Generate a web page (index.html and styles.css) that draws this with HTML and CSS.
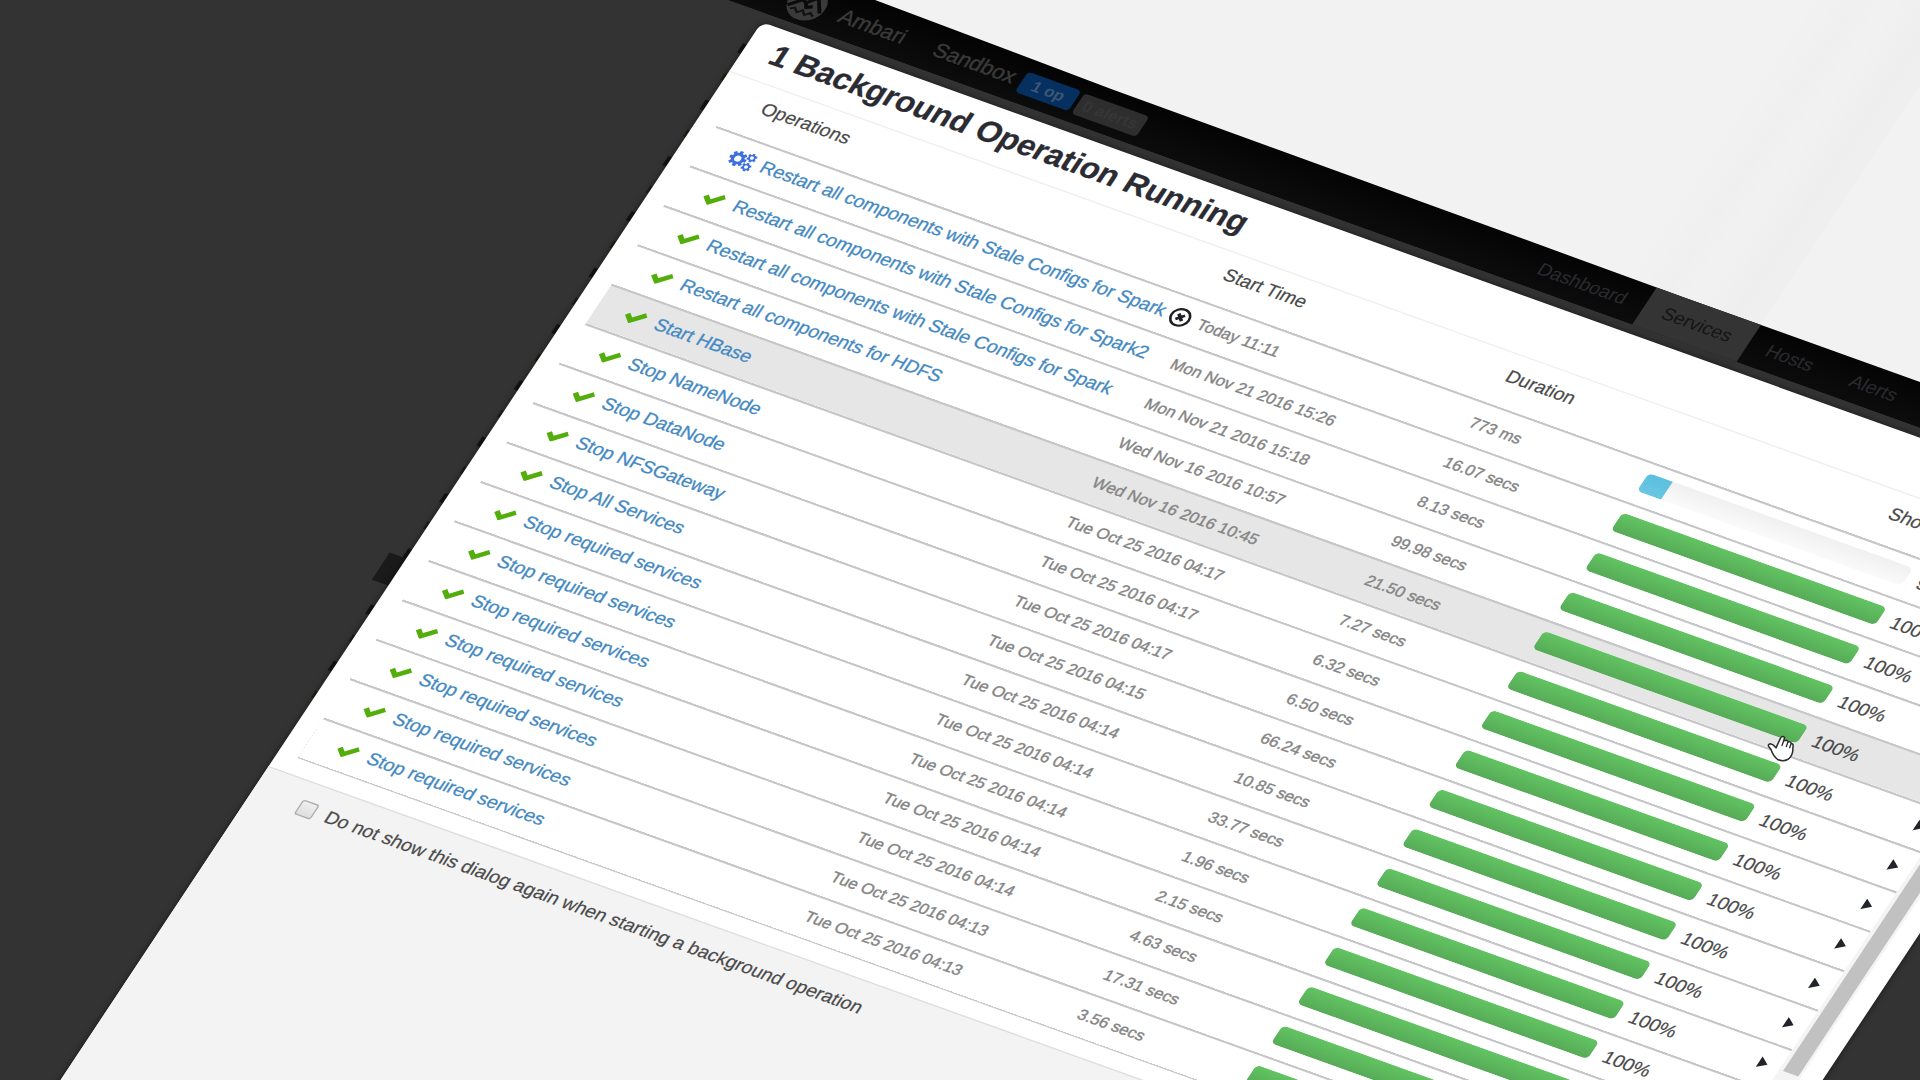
FILE: index.html
```html
<!DOCTYPE html>
<html lang="en">
<head>
<meta charset="utf-8">
<title>Ambari - Background Operations</title>
<link rel="stylesheet" href="styles.css">
</head>
<body>
<div class="stage">
  <div class="backdrop"></div>
  <div class="beam"></div>
  <nav class="navbar">
    <svg class="logo" viewBox="0 0 28 28"><circle cx="14" cy="14" r="14" fill="#3a3a3a"/><path d="M2 20 L10 12 L13 14 L19 7 L26 18 M13 14 L15 17 L19 15" fill="none" stroke="#0b0b0b" stroke-width="2.6"/><path d="M5 22 l3-2 3 3 3-3 3 3 3-3 3 2" fill="none" stroke="#111" stroke-width="1.6"/></svg>
    <span class="brand">Ambari</span>
    <span class="cluster">Sandbox</span>
    <span class="badge badge-ops">1 op</span>
    <span class="badge badge-alerts">0 alerts</span>
    <span class="tab tab-dashboard">Dashboard</span>
    <span class="tab tab-active">Services</span>
    <span class="tab">Hosts</span>
    <span class="tab">Alerts</span>
  </nav>
  <div class="sidebar-peek" id="peek"></div>
  <div class="menu-peek"></div>
  <section class="modal">
    <header class="modal-header">1 Background Operation Running</header>
    <div class="modal-body">
      <div class="table">
        <div class="table-head"><span>Operations</span><span>Start Time</span><span>Duration</span><span>Show: All (10)</span></div>
        <div id="rows"></div>
      </div>
      <div class="scrollbar"><div class="thumb"></div></div>
    </div>
    <footer class="modal-footer"><span class="checkbox"></span><span>Do not show this dialog again when starting a background operation</span></footer>
  </section>
</div>
<svg class="cursor" viewBox="0 0 84 80"><path d="M41 8 Q46 1 53 7 L50 17 L57 15 Q62 15 64 20 Q71 18 73 25 Q80 26 78 34 L77 50 Q73 66 62 73 Q48 80 32 73 Q18 62 12 43 L5 34 Q2 27 10 26 Q18 27 27 38 Z" fill="#fff" stroke="#2b2b2b" stroke-width="4.5" stroke-linejoin="round"/><path d="M50 17 L45 31 M63 20 L58 34 M72 26 L68 38" fill="none" stroke="#2b2b2b" stroke-width="4" stroke-linecap="round"/></svg>
<script src="script.js"></script>
</body>
</html>
```

FILE: script.js
```js
const operations = [
  ["Restart all components with Stale Configs for Spark", "Today 11:11", "773 ms", 9],
  ["Restart all components with Stale Configs for Spark2", "Mon Nov 21 2016 15:26", "16.07 secs", 100],
  ["Restart all components with Stale Configs for Spark", "Mon Nov 21 2016 15:18", "8.13 secs", 100],
  ["Restart all components for HDFS", "Wed Nov 16 2016 10:57", "99.98 secs", 100],
  ["Start HBase", "Wed Nov 16 2016 10:45", "21.50 secs", 100],
  ["Stop NameNode", "Tue Oct 25 2016 04:17", "7.27 secs", 100],
  ["Stop DataNode", "Tue Oct 25 2016 04:17", "6.32 secs", 100],
  ["Stop NFSGateway", "Tue Oct 25 2016 04:17", "6.50 secs", 100],
  ["Stop All Services", "Tue Oct 25 2016 04:15", "66.24 secs", 100],
  ["Stop required services", "Tue Oct 25 2016 04:14", "10.85 secs", 100],
  ["Stop required services", "Tue Oct 25 2016 04:14", "33.77 secs", 100],
  ["Stop required services", "Tue Oct 25 2016 04:14", "1.96 secs", 100],
  ["Stop required services", "Tue Oct 25 2016 04:14", "2.15 secs", 100],
  ["Stop required services", "Tue Oct 25 2016 04:14", "4.63 secs", 100],
  ["Stop required services", "Tue Oct 25 2016 04:13", "17.31 secs", 100],
  ["Stop required services", "Tue Oct 25 2016 04:13", "3.56 secs", 100]
];

function gear(cx, cy, r, teeth, w) {
  let t = "";
  for (let i = 0; i < teeth; i++) {
    t += `<rect x="${cx - w / 2}" y="${cy - r}" width="${w}" height="${r * 0.5}" transform="rotate(${i * 360 / teeth} ${cx} ${cy})" fill="#3c6fdf"/>`;
  }
  return t + `<circle cx="${cx}" cy="${cy}" r="${r * 0.57}" fill="none" stroke="#3c6fdf" stroke-width="${r * 0.36}"/>`;
}
const gears = `<svg class="icon gears" viewBox="0 0 19 16">${gear(6.2, 8, 6.3, 8, 2.5)}${gear(15, 4, 3.6, 6, 1.6)}${gear(15, 12, 3.6, 6, 1.6)}</svg>`;
const check = `<svg class="icon check" viewBox="0 0 16 12"><path d="M1.6 5.6 L6 9.7 L14.4 1.9" fill="none" stroke="#53ad0b" stroke-width="3.8"/></svg>`;
const abort = `<svg class="abort" viewBox="0 0 16 16"><circle cx="8" cy="8" r="6.8" fill="none" stroke="#1f1f24" stroke-width="1.8"/><path d="M5.6 5.6 L10.4 10.4 M10.4 5.6 L5.6 10.4" stroke="#1f1f24" stroke-width="2.4"/></svg>`;

document.getElementById("rows").innerHTML = operations.map(([name, start, duration, pct], i) => `
  <div class="row${i === 4 ? " row-hover" : ""}">
    <span class="name">${pct < 100 ? gears : check}<a>${name}</a>${pct < 100 ? abort : ""}</span>
    <span class="meta">${start}</span>
    <span class="meta">${duration}</span>
    <span class="track${pct < 100 ? " track-active" : ""}"><span class="fill" style="width:${pct}%"></span></span>
    <span class="pct">${pct}%</span>
    <span class="arrow"></span>
  </div>`).join("");

document.getElementById("peek").innerHTML = "<i></i>".repeat(24);
```

FILE: styles.css
```css
* { box-sizing: border-box; }

html { overflow: hidden; }

body {
  margin: 0;
  width: 1920px;
  height: 1080px;
  overflow: hidden;
  position: relative;
  background: #f2f2f2;
  font-family: "Liberation Sans", Arial, sans-serif;
  font-size: 14px;
  color: #4a4a4a;
}

/* Everything on the tilted plane shares one affine projection. */
.stage {
  position: absolute;
  left: 0;
  top: 0;
  width: 1119px;
  transform-origin: 0 0;
  transform: matrix(1.272, 0.4566, -0.747, 1.127, 761.8, 22.1);
  white-space: nowrap;
}

.backdrop {
  position: absolute;
  left: -1100px;
  top: -8px;
  width: 3000px;
  height: 1500px;
  background: #333;
}

.beam {
  position: absolute;
  left: 655px;
  top: -600px;
  width: 107px;
  height: 600px;
  background: linear-gradient(90deg, rgba(0,0,0,0), rgba(0,0,0,.012) 30%, rgba(0,0,0,.005) 50%, rgba(0,0,0,.016) 80%, rgba(0,0,0,.012) 100%);
}

.navbar {
  position: absolute;
  left: -200px;
  top: -46px;
  width: 1700px;
  height: 39px;
  padding: 3px 0 0 207px;
  display: flex;
  align-items: center;
  background: linear-gradient(#030303, #0c0c0c);
  clip-path: polygon(0 0, 200px 0, 450px 4px, 900px 6px, 100% 6px, 100% 100%, 0 100%);
}

.logo { width: 28px; height: 28px; margin-right: 12px; }
.brand, .cluster {
  font-size: 16px;
  color: #3a3a3a;
  -webkit-text-stroke: .3px #3a3a3a;
}
.brand { width: 74px; }
.cluster { width: 69px; }

.badge {
  height: 18px;
  margin-right: 3px;
  border-radius: 3px;
  font-size: 12px;
  font-weight: bold;
  line-height: 18px;
  text-align: center;
}
.badge-ops { width: 42px; margin-top: 1px; background: #05305f; color: #3d5673; }
.badge-alerts { width: 51px; margin-top: 3px; background: #2e2e2e; color: #363636; }

.tab {
  height: 36px;
  padding: 3px 15px 0;
  line-height: 33px;
  color: #2a2b2f;
}
.tab-dashboard { margin-left: 293px; padding-right: 14px; }
.tab-active { width: 82px; background: #343434; color: #151515; }

.sidebar-peek {
  position: absolute;
  left: -3px;
  top: 20px;
  height: 580px;
  display: flex;
  flex-direction: column;
  justify-content: space-between;
}
.sidebar-peek i { width: 4px; height: 8px; background: #141414; }
.sidebar-peek i:nth-child(even) { width: 3px; margin-left: 1px; height: 6px; background: #1f2014; }

.menu-peek {
  position: absolute;
  left: -13px;
  top: 476px;
  width: 13px;
  height: 24px;
  background: #1a1a1a;
}

.modal {
  position: relative;
  width: 1119px;
  border-radius: 6px;
  background: #fff;
  box-shadow: 0 0 5px rgba(0, 0, 0, .55);
}

.modal-header {
  height: 44px;
  padding: 5px 20px 0;
  border-bottom: 1px solid #eee;
  font-size: 23.3px;
  font-weight: bold;
  line-height: 30px;
  color: #2b2b33;
  -webkit-text-stroke: .2px #2b2b33;
}

.modal-body {
  height: 616px;
  padding: 0 15px 14px;
  display: flex;
}
.table { width: 1072px; }

.table-head {
  height: 42px;
  padding: 0 0 8px 21.5px;
  display: grid;
  grid-template-columns: 363.5px 222px 301px 1fr;
  align-items: center;
  overflow: hidden;
  -webkit-text-stroke: .15px #4a4a4a;
}

.row {
  height: 35px;
  display: grid;
  grid-template-columns: 389px 214.5px 134.5px 208px 108px 1fr;
  align-items: center;
  box-shadow: inset 0 1.7px 0 #c6c6c8;
}
.row:last-child { box-shadow: inset 0 1.7px 0 #c6c6c8, 0 1px 0 #c8c8c8; }
.row-hover { background: #e6e6e6; }

.name { display: flex; align-items: center; padding-left: 21px; }
.name a {
  position: relative;
  top: -.8px;
  letter-spacing: -.05px;
  color: #4489c2;
  -webkit-text-stroke: .2px #4489c2;
}
.icon { flex: none; }
.gears { width: 19px; height: 16px; margin-right: 5.5px; }
.check { width: 16px; height: 12px; margin-right: 7.5px; }
.abort { width: 16px; height: 16px; margin-left: 4px; }
.meta {
  font-size: 12px;
  color: #858585;
  -webkit-text-stroke: .3px #858585;
}

.track {
  height: 16px;
  margin-top: -1px;
  border-radius: 4px;
  overflow: hidden;
  background: #f5f5f5;
}
.track-active { background: linear-gradient(#f0f0f0, #fafafa); }
.fill { display: block; height: 100%; background: linear-gradient(#62c462, #57ab57); }
.track-active .fill { background: linear-gradient(#5bc0de, #69c6e4); }
.pct { padding-left: 9px; -webkit-text-stroke: .15px #4a4a4a; }
.arrow {
  width: 7px;
  height: 10px;
  margin-left: 1.5px;
  background: #22242b;
  clip-path: polygon(0 0, 100% 50%, 0 100%);
}

.scrollbar { width: 17px; padding: 42px 3px 0; background: linear-gradient(#fff 42px, #f4f4f4 42px); }
.thumb { width: 12px; height: 403px; background: #c1c1c1; }

.modal-footer {
  height: 600px;
  padding: 12px 36px;
  border-top: 1px solid #ddd;
  display: flex;
  align-items: flex-start;
  gap: 8.5px;
  line-height: 17px;
  background: #f3f3f3;
  -webkit-text-stroke: .15px #4a4a4a;
}
.checkbox {
  width: 13px;
  height: 13px;
  margin-top: 2px;
  border: 1px solid #aaa;
  border-radius: 2px;
  background: linear-gradient(#efefef, #dedede);
}

.cursor {
  position: absolute;
  left: 1767px;
  top: 735px;
  width: 28px;
  height: 27px;
}
```
